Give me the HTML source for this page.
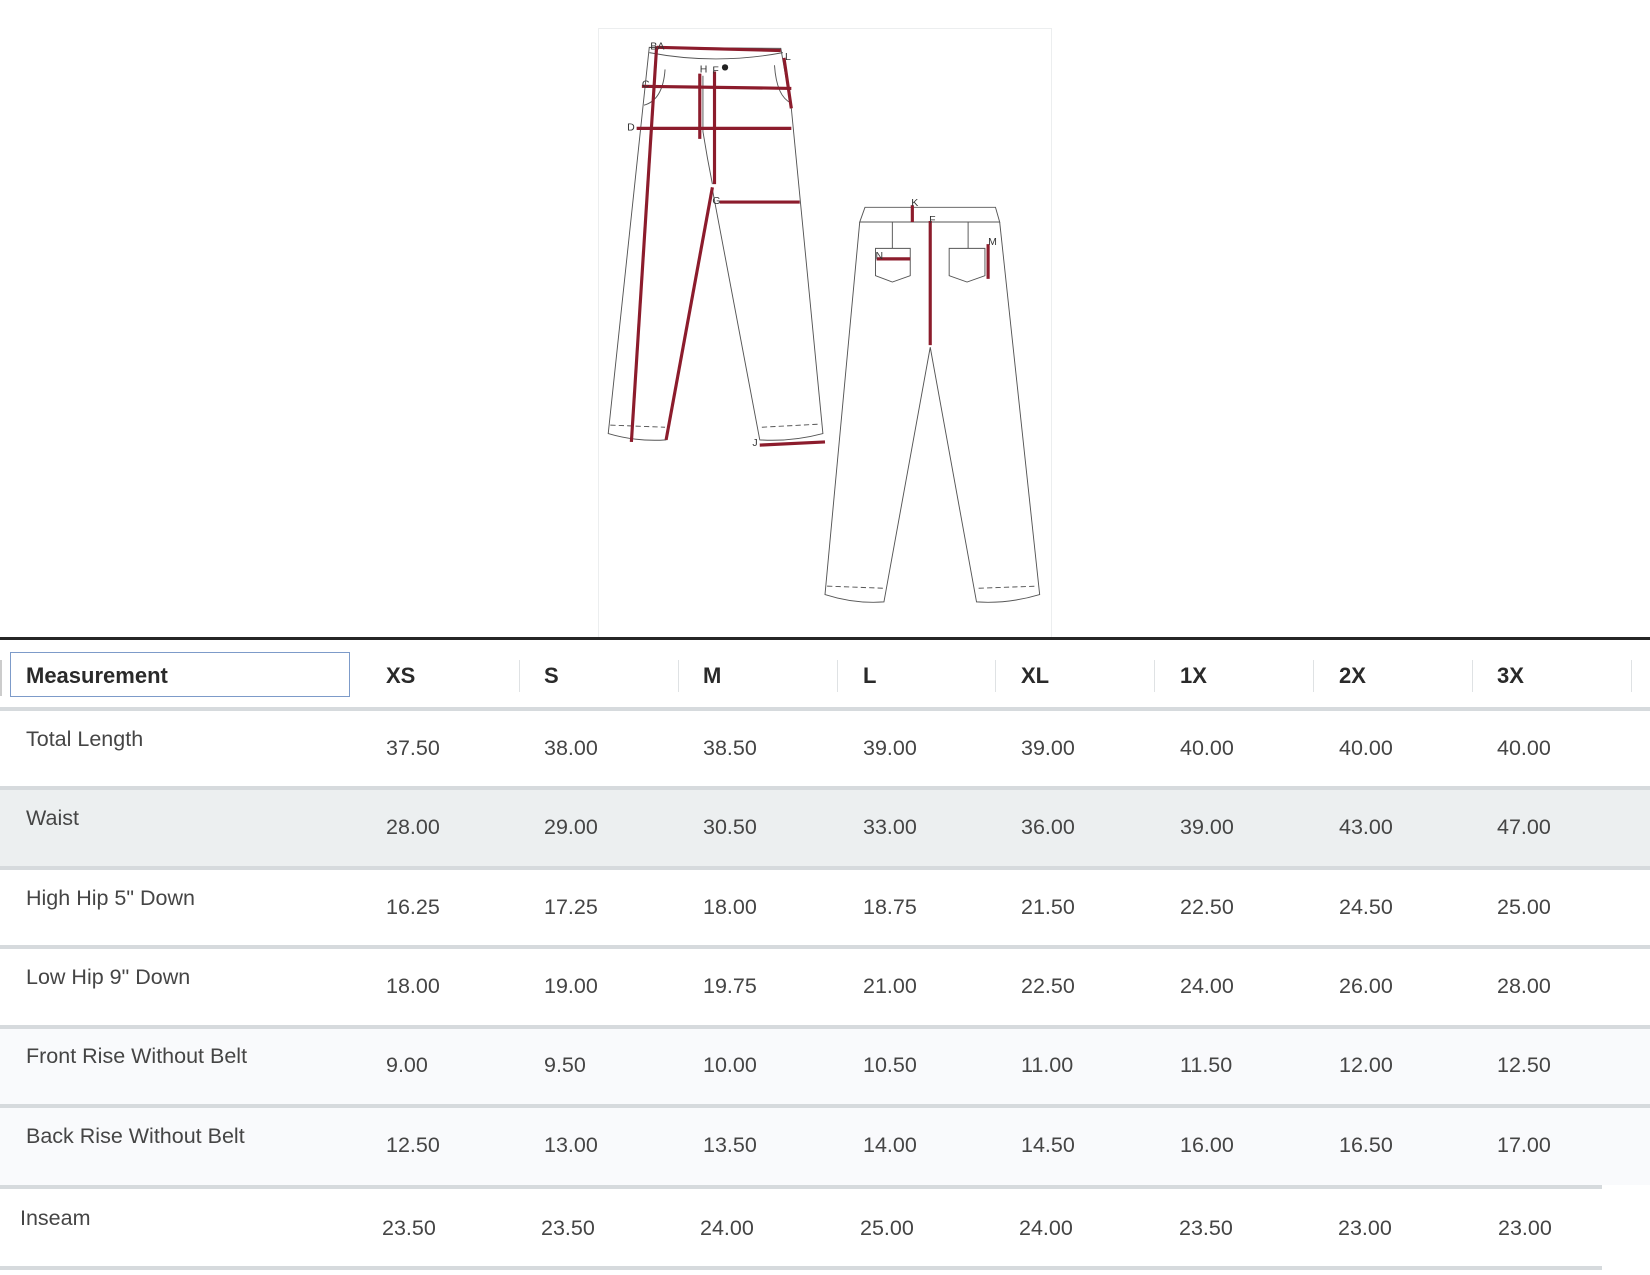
<!DOCTYPE html>
<html><head><meta charset="utf-8"><style>
body{margin:0;width:1650px;height:1275px;background:#fff;position:relative;overflow:hidden;font-family:"Liberation Sans",sans-serif;color:#454545}
.a{position:absolute;white-space:nowrap}
.h{font-weight:bold;font-size:22px;color:#2a2a2a;line-height:26px}
.t{font-size:21.5px;line-height:26px}
.ln{position:absolute;left:0;height:4px;background:#d6dadd}
.sep{position:absolute;top:660px;height:32px;width:1px;background:#dfe2e4}
</style></head><body>
<div style="position:absolute;left:598px;top:28px;width:452px;height:608px;border:1px solid #eceeef;border-bottom:none"></div>
<svg class="a" style="left:0;top:0" width="1650" height="640" viewBox="0 0 1568 608.2">
<g fill="none" stroke="#555" stroke-width="0.9">
<path d="M617 45 L578 412 Q605 420 633 418 L677 180 L722 418 Q752 420 782 412 L752 103 L742 46 Z"/>
<path d="M617 50 Q680 62 744 50"/>
<path d="M580 404 L632 406 M724 406 L780 403" stroke-dasharray="5 3"/>
<path d="M632 66 Q630 95 612 100 M736 62 Q738 92 752 98"/>
<path d="M668 72 L668 125 Q672 150 677 175"/>
<path d="M822 197 L946 197 L950 211 L817 211 Z"/>
<path d="M817 211 L784 565 Q812 574 840 572 L884 330 L928 572 Q958 574 988 565 L950 211"/>
<path d="M786 557 L839 559 M930 559 L986 557" stroke-dasharray="5 3"/>
<path d="M848 211 L848 236 M920 211 L920 236"/>
<path d="M832 236 L865 236 L865 262 L848 268 L832 262 Z M902 236 L936 236 L936 262 L919 268 L902 262 Z"/>
</g>
<g stroke="#8c1c2c" stroke-width="3" fill="none">
<path d="M624 44 L600 420"/><path d="M624 45 L742 48"/><path d="M745 55 L752 103"/>
<path d="M610 82 L752 84"/><path d="M605 122 L752 122"/><path d="M665 70 L665 132"/>
<path d="M679 68 L679 175"/><path d="M677 178 L633 418"/><path d="M684 192 L760 192"/>
<path d="M722 423 L784 420"/><path d="M884 210 L884 328"/><path d="M867 195 L867 211"/>
<path d="M833 246 L865 246"/><path d="M939 232 L939 265"/>
</g>
<circle cx="689" cy="64" r="3" fill="#222"/>
<g font-family="Liberation Sans" font-size="10" fill="#333">
<text x="618" y="47">BA</text><text x="746" y="57">L</text><text x="665" y="69">H</text><text x="677" y="70">F</text>
<text x="610" y="83">C</text><text x="596" y="124">D</text><text x="677" y="194">G</text><text x="715" y="424">J</text>
<text x="866" y="196">K</text><text x="883" y="212">F</text><text x="832" y="246">N</text><text x="939" y="233">M</text>
</g>
</svg>
<div class="a" style="left:0;top:637px;width:1650px;height:3px;background:#262626"></div>
<div class="a" style="left:10px;top:652px;width:340px;height:45px;border:1.5px solid #7d9bc9;box-sizing:border-box"></div>
<div class="a" style="left:0;top:660px;width:2px;height:36px;background:#ccc"></div>
<div class="a h" style="left:26px;top:663px">Measurement</div>
<div class="a h" style="left:386px;top:663px">XS</div>
<div class="a h" style="left:544px;top:663px">S</div>
<div class="a h" style="left:703px;top:663px">M</div>
<div class="a h" style="left:863px;top:663px">L</div>
<div class="a h" style="left:1021px;top:663px">XL</div>
<div class="a h" style="left:1180px;top:663px">1X</div>
<div class="a h" style="left:1339px;top:663px">2X</div>
<div class="a h" style="left:1497px;top:663px">3X</div>
<div class="sep" style="left:519px"></div><div class="sep" style="left:678px"></div><div class="sep" style="left:837px"></div><div class="sep" style="left:995px"></div><div class="sep" style="left:1154px"></div><div class="sep" style="left:1313px"></div><div class="sep" style="left:1472px"></div><div class="sep" style="left:1631px"></div>
<div class="a" style="left:0;top:790px;width:1650px;height:77px;background:#eceff0"></div>
<div class="a" style="left:0;top:1029px;width:1650px;height:156px;background:#f9fafc"></div>
<div class="ln" style="top:707px;width:1650px"></div>
<div class="ln" style="top:786px;width:1650px"></div>
<div class="ln" style="top:866px;width:1650px"></div>
<div class="ln" style="top:945px;width:1650px"></div>
<div class="ln" style="top:1025px;width:1650px"></div>
<div class="ln" style="top:1104px;width:1650px"></div>
<div class="ln" style="top:1185px;width:1602px"></div>
<div class="ln" style="top:1266px;width:1602px"></div>

<div class="a t" style="left:26px;top:726px">Total Length</div>
<div class="a t" style="left:26px;top:805px">Waist</div>
<div class="a t" style="left:26px;top:885px">High Hip 5" Down</div>
<div class="a t" style="left:26px;top:964px">Low Hip 9" Down</div>
<div class="a t" style="left:26px;top:1043px">Front Rise Without Belt</div>
<div class="a t" style="left:26px;top:1123px">Back Rise Without Belt</div>
<div class="a t" style="left:20px;top:1205px">Inseam</div>

<div class="a t" style="left:386px;top:735px">37.50</div><div class="a t" style="left:544px;top:735px">38.00</div><div class="a t" style="left:703px;top:735px">38.50</div><div class="a t" style="left:863px;top:735px">39.00</div><div class="a t" style="left:1021px;top:735px">39.00</div><div class="a t" style="left:1180px;top:735px">40.00</div><div class="a t" style="left:1339px;top:735px">40.00</div><div class="a t" style="left:1497px;top:735px">40.00</div>
<div class="a t" style="left:386px;top:814px">28.00</div><div class="a t" style="left:544px;top:814px">29.00</div><div class="a t" style="left:703px;top:814px">30.50</div><div class="a t" style="left:863px;top:814px">33.00</div><div class="a t" style="left:1021px;top:814px">36.00</div><div class="a t" style="left:1180px;top:814px">39.00</div><div class="a t" style="left:1339px;top:814px">43.00</div><div class="a t" style="left:1497px;top:814px">47.00</div>
<div class="a t" style="left:386px;top:894px">16.25</div><div class="a t" style="left:544px;top:894px">17.25</div><div class="a t" style="left:703px;top:894px">18.00</div><div class="a t" style="left:863px;top:894px">18.75</div><div class="a t" style="left:1021px;top:894px">21.50</div><div class="a t" style="left:1180px;top:894px">22.50</div><div class="a t" style="left:1339px;top:894px">24.50</div><div class="a t" style="left:1497px;top:894px">25.00</div>
<div class="a t" style="left:386px;top:973px">18.00</div><div class="a t" style="left:544px;top:973px">19.00</div><div class="a t" style="left:703px;top:973px">19.75</div><div class="a t" style="left:863px;top:973px">21.00</div><div class="a t" style="left:1021px;top:973px">22.50</div><div class="a t" style="left:1180px;top:973px">24.00</div><div class="a t" style="left:1339px;top:973px">26.00</div><div class="a t" style="left:1497px;top:973px">28.00</div>
<div class="a t" style="left:386px;top:1052px">9.00</div><div class="a t" style="left:544px;top:1052px">9.50</div><div class="a t" style="left:703px;top:1052px">10.00</div><div class="a t" style="left:863px;top:1052px">10.50</div><div class="a t" style="left:1021px;top:1052px">11.00</div><div class="a t" style="left:1180px;top:1052px">11.50</div><div class="a t" style="left:1339px;top:1052px">12.00</div><div class="a t" style="left:1497px;top:1052px">12.50</div>
<div class="a t" style="left:386px;top:1132px">12.50</div><div class="a t" style="left:544px;top:1132px">13.00</div><div class="a t" style="left:703px;top:1132px">13.50</div><div class="a t" style="left:863px;top:1132px">14.00</div><div class="a t" style="left:1021px;top:1132px">14.50</div><div class="a t" style="left:1180px;top:1132px">16.00</div><div class="a t" style="left:1339px;top:1132px">16.50</div><div class="a t" style="left:1497px;top:1132px">17.00</div>
<div class="a t" style="left:382px;top:1215px">23.50</div><div class="a t" style="left:541px;top:1215px">23.50</div><div class="a t" style="left:700px;top:1215px">24.00</div><div class="a t" style="left:860px;top:1215px">25.00</div><div class="a t" style="left:1019px;top:1215px">24.00</div><div class="a t" style="left:1179px;top:1215px">23.50</div><div class="a t" style="left:1338px;top:1215px">23.00</div><div class="a t" style="left:1498px;top:1215px">23.00</div>
</body></html>
